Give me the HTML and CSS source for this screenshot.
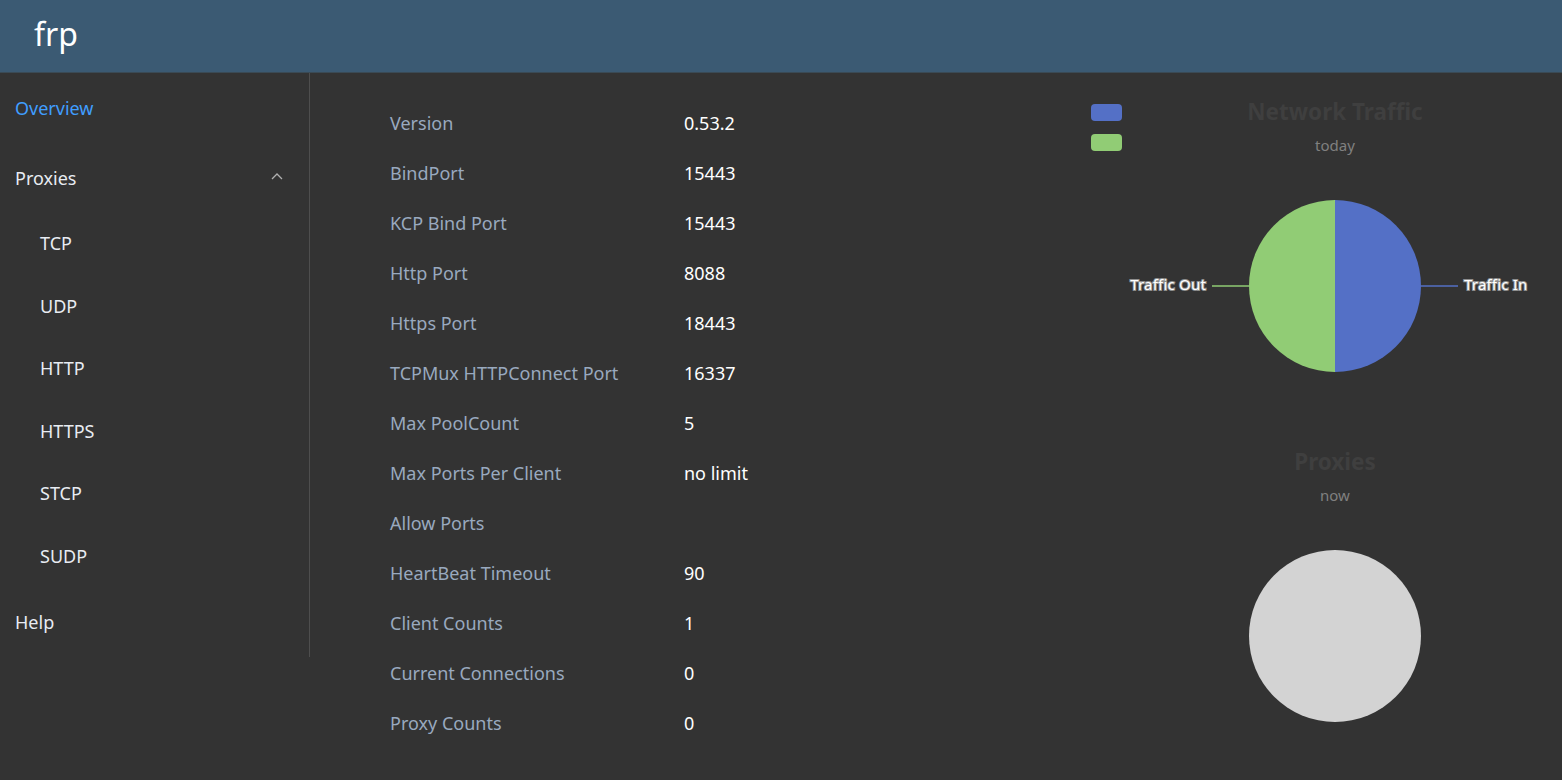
FILE: index.html
```html
<!DOCTYPE html>
<html>
<head>
<meta charset="utf-8">
<link rel="stylesheet" href="styles.css">
</head>
<body>
<header class="topbar"><span class="brand">frp</span></header>
<div class="layout">
  <nav class="sidebar">
    <div class="menu-item active">Overview</div>
    <div class="menu-item submenu-title">Proxies
      <svg class="chev" width="12" height="7" viewBox="0 0 12 7"><path d="M1 6 L6 1 L11 6" fill="none" stroke="#b0b0b0" stroke-width="1.3"/></svg>
    </div>
    <div class="sub-item">TCP</div>
    <div class="sub-item">UDP</div>
    <div class="sub-item">HTTP</div>
    <div class="sub-item">HTTPS</div>
    <div class="sub-item">STCP</div>
    <div class="sub-item">SUDP</div>
    <div class="menu-item help">Help</div>
  </nav>
  <main class="content">
    <div class="info">
      <div class="row"><span class="label">Version</span><span class="value">0.53.2</span></div>
      <div class="row"><span class="label">BindPort</span><span class="value">15443</span></div>
      <div class="row"><span class="label">KCP Bind Port</span><span class="value">15443</span></div>
      <div class="row"><span class="label">Http Port</span><span class="value">8088</span></div>
      <div class="row"><span class="label">Https Port</span><span class="value">18443</span></div>
      <div class="row"><span class="label">TCPMux HTTPConnect Port</span><span class="value">16337</span></div>
      <div class="row"><span class="label">Max PoolCount</span><span class="value">5</span></div>
      <div class="row"><span class="label">Max Ports Per Client</span><span class="value">no limit</span></div>
      <div class="row"><span class="label">Allow Ports</span><span class="value"></span></div>
      <div class="row"><span class="label">HeartBeat Timeout</span><span class="value">90</span></div>
      <div class="row"><span class="label">Client Counts</span><span class="value">1</span></div>
      <div class="row"><span class="label">Current Connections</span><span class="value">0</span></div>
      <div class="row"><span class="label">Proxy Counts</span><span class="value">0</span></div>
    </div>
    <div class="charts">
      <svg class="chart" width="488" height="350" viewBox="0 0 488 350">
        <rect x="0" y="31" width="31" height="17" rx="4" fill="#5470c6"/>
        <rect x="0" y="61" width="31" height="17" rx="4" fill="#91cc75"/>
        <text class="c-title" x="244" y="47">Network Traffic</text>
        <text class="c-sub" x="244" y="78">today</text>
        <path d="M244 127 A86 86 0 0 1 244 299 Z" fill="#5470c6"/>
        <path d="M244 299 A86 86 0 0 1 244 127 Z" fill="#91cc75"/>
        <line x1="330" y1="213" x2="367" y2="213" stroke="#5470c6" stroke-width="1.5"/>
        <line x1="121" y1="213" x2="158" y2="213" stroke="#91cc75" stroke-width="1.5"/>
        <text class="c-label" x="373" y="217">Traffic In</text>
        <text class="c-label end" x="115" y="217">Traffic Out</text>
      </svg>
      <svg class="chart" width="488" height="350" viewBox="0 0 488 350">
        <text class="c-title" x="244" y="47">Proxies</text>
        <text class="c-sub" x="244" y="78">now</text>
        <circle cx="244" cy="213" r="86" fill="#d3d3d3"/>
      </svg>
    </div>
  </main>
</div>
</body>
</html>
```

FILE: styles.css
```css
html, body {
  margin: 0;
  padding: 0;
  overflow: hidden;
}
body {
  background: #333333;
  font-family: "Noto Sans", "Open Sans", sans-serif;
  width: 1562px;
  height: 780px;
}
.topbar {
  height: 73px;
  background: #3b5a73;
  display: flex;
  align-items: center;
  padding-left: 34px;
  box-sizing: border-box;
  border-bottom: 1px solid #3a4a55;
}
.brand {
  color: #ffffff;
  font-size: 32px;
  line-height: 1;
  margin-top: -4px;
}
.layout {
  display: flex;
}
.sidebar {
  width: 309px;
  height: 584px;
  border-right: 1px solid #4e4e4e;
  flex-shrink: 0;
}
.menu-item {
  height: 70px;
  display: flex;
  align-items: center;
  padding-left: 15px;
  font-size: 18px;
  color: #e8ecf2;
}
.menu-item.active {
  color: #409eff;
}
.submenu-title {
  justify-content: space-between;
  padding-right: 26px;
  height: 69px;
}
.chev {
  margin-top: -2px;
}
.sub-item {
  height: 62.5px;
  display: flex;
  align-items: center;
  padding-left: 40px;
  font-size: 18px;
  color: #e8ecf2;
}
.menu-item.help {
  height: 70px;
}
.content {
  flex: 1;
  display: flex;
}
.info {
  padding-left: 80px;
  padding-top: 25px;
  width: 700px;
}
.row {
  height: 50px;
  display: flex;
  align-items: center;
  font-size: 18px;
}
.label {
  width: 294px;
  color: #99a9bf;
}
.value {
  color: #ffffff;
}
.charts {
  display: flex;
  flex-direction: column;
  margin-left: 1px;
}
.chart {
  display: block;
  overflow: visible;
}
.c-title {
  font-family: "Noto Sans", "Open Sans", sans-serif;
  font-weight: bold;
  font-size: 22.5px;
  fill: #3f3f3f;
  text-anchor: middle;
}
.c-sub {
  font-family: "Noto Sans", "Open Sans", sans-serif;
  font-size: 15px;
  fill: #808080;
  text-anchor: middle;
}
.c-label {
  font-family: "Noto Sans", "Open Sans", sans-serif;
  font-size: 15px;
  fill: #ffffff;
  stroke: #8e8e8e;
  stroke-width: 2px;
  paint-order: stroke;
  letter-spacing: 0.2px;
}
.c-label.end {
  text-anchor: end;
}
```
